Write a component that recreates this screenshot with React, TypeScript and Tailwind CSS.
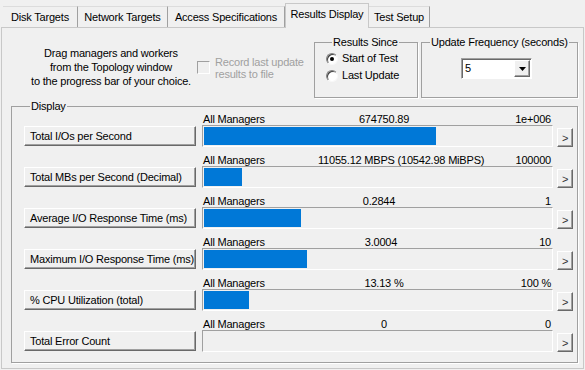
import React from "react";

const tabs = [
  { name: "Disk Targets", w: "w-[75px]", active: false },
  { name: "Network Targets", w: "w-[90px]", active: false },
  { name: "Access Specifications", w: "w-[117px]", active: false },
  { name: "Results Display", w: "w-[84px]", active: true },
  { name: "Test Setup", w: "w-[61px]", active: false },
];

const rows = [
  { label: "Total I/Os per Second", value: "674750.89", max: "1e+006", fill: 232, shift: "" },
  { label: "Total MBs per Second (Decimal)", value: "11055.12 MBPS (10542.98 MiBPS)", max: "100000", fill: 38, shift: "pl-[24px]" },
  { label: "Average I/O Response Time (ms)", value: "0.2844", max: "1", fill: 97, shift: "pr-[10px]" },
  { label: "Maximum I/O Response Time (ms)", value: "3.0004", max: "10", fill: 103, shift: "pr-[6px]" },
  { label: "% CPU Utilization (total)", value: "13.13 %", max: "100 %", fill: 45, shift: "" },
  { label: "Total Error Count", value: "0", max: "0", fill: 0, shift: "" },
];

// classic raised 3D edge
const raised =
  "border border-t-white border-l-white border-b-[#696969] border-r-[#696969] shadow-[inset_-1px_-1px_0_#a0a0a0] bg-[#f0f0f0]";
// classic sunken edge
const sunken = "border border-t-[#a0a0a0] border-l-[#a0a0a0] border-b-white border-r-white";

const Radio = ({ checked }: { checked?: boolean }) => (
  <div className="w-[12px] h-[12px] rounded-full border border-t-[#808080] border-l-[#808080] border-b-[#f8f8f8] border-r-[#f8f8f8] bg-white flex items-center justify-center shadow-[inset_1px_1px_0_#404040]">
    {checked && <div className="w-[4px] h-[4px] rounded-full bg-black" />}
  </div>
);

const ResultRow = ({ row }: { row: (typeof rows)[number] }) => (
  <div className="h-[41px] flex flex-col">
    <div className="h-[13px] leading-[13px] flex pl-[179px] w-[529px] whitespace-nowrap">
      <span className="w-[91px]">All Managers</span>
      <span className={`w-[180px] text-center ${row.shift}`}>{row.value}</span>
      <span className="flex-1 text-right pr-[2px]">{row.max}</span>
    </div>
    <div className="flex items-start">
      <button className={`w-[172px] h-[20px] text-left pl-[5px] leading-[17px] whitespace-nowrap overflow-hidden ${raised}`}>
        {row.label}
      </button>
      <div className={`ml-[6px] mt-[-1px] w-[351px] h-[22px] pl-[1px] pt-[1px] ${sunken}`}>
        {row.fill > 0 && <div className="h-[18px] bg-[#0078d7]" style={{ width: row.fill }} />}
      </div>
      <button className={`ml-[4px] mt-[2px] w-[16px] h-[19px] leading-[16px] text-[#333] ${raised}`}>&gt;</button>
    </div>
  </div>
);

export default function App() {
  return (
    <div className="w-[585px] h-[370px] bg-[#f0f0f0] text-[11px] tracking-[-0.2px] text-black font-['Liberation_Sans',Arial,sans-serif] overflow-hidden">
      <div className="flex items-end h-[27px] pl-[3px] relative z-10">
        {tabs.map((t) =>
          t.active ? (
            <div
              key={t.name}
              className={`${t.w} h-[25px] mb-[-1px] pb-[3px] bg-[#f0f0f0] border border-b-0 border-[#c8c8c8] flex items-center justify-center`}
            >
              {t.name}
            </div>
          ) : (
            <div
              key={t.name}
              className={`${t.w} h-[21px] border-t border-t-[#dcdcdc] border-r border-r-[#a0a0a0] flex items-center justify-center`}
            >
              {t.name}
            </div>
          )
        )}
      </div>

      <div className="ml-[1px] w-[583px] h-[342px] border border-[#c8c8c8]">
        <div className="flex items-start h-[72px] pl-[23px]">
          <div className="w-[172px] mt-[18px] text-center leading-[14px] whitespace-nowrap">
            Drag managers and workers
            <br />
            from the Topology window
            <br />
            to the progress bar of your choice.
          </div>

          <div className="w-[117px] mt-[28px] flex items-start">
            <div className={`mt-[5px] w-[13px] h-[13px] shrink-0 bg-[#f0f0f0] ${sunken}`} />
            <div className="ml-[5px] leading-[12px] text-[#a0a0a0] whitespace-nowrap">
              Record last update
              <br />
              results to file
            </div>
          </div>

          <fieldset className="mt-[8px] w-[104px] h-[62px] border border-[#a0a0a0] shadow-[1px_1px_0_#fff] pl-[11px]">
            <legend className="ml-[6px] px-[1px] leading-[13px]">Results Since</legend>
            <div className="mt-[1px] h-[17px] flex items-center gap-[4px]">
              <Radio checked />
              <span>Start of Test</span>
            </div>
            <div className="h-[17px] flex items-center gap-[4px]">
              <Radio />
              <span>Last Update</span>
            </div>
          </fieldset>

          <fieldset className="mt-[8px] ml-[3px] w-[157px] h-[62px] border border-[#a0a0a0] shadow-[1px_1px_0_#fff]">
            <legend className="ml-[8px] px-[1px] leading-[13px] whitespace-nowrap">Update Frequency (seconds)</legend>
            <div className={`ml-[39px] mt-[9px] w-[71px] h-[21px] bg-white flex items-center justify-between ${sunken} shadow-[inset_1px_1px_0_#696969]`}>
              <span className="pl-[3px]">5</span>
              <div className={`w-[16px] h-[17px] mr-[1px] flex items-center justify-center ${raised}`}>
                <svg width="7" height="4" viewBox="0 0 7 4">
                  <path d="M0 0h7L3.5 4z" fill="#000" />
                </svg>
              </div>
            </div>
          </fieldset>
        </div>

        <fieldset className="ml-[9px] w-[567px] h-[263px] border border-[#a0a0a0] shadow-[1px_1px_0_#fff] pl-[12px]">
          <legend className="ml-[6px] px-[1px] leading-[13px]">Display</legend>
          {rows.map((r) => (
            <ResultRow key={r.label} row={r} />
          ))}
        </fieldset>
      </div>
    </div>
  );
}
